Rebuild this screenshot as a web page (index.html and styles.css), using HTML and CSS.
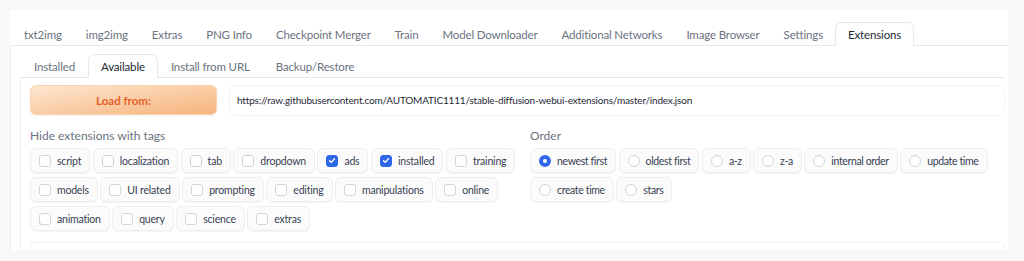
FILE: index.html
```html
<!DOCTYPE html>
<html>
<head>
<meta charset="utf-8">
<link rel="stylesheet" href="styles.css">
</head>
<body>
<div class="app">
  <div class="tabs main-tabs">
    <span class="tab">txt2img</span>
    <span class="tab">img2img</span>
    <span class="tab">Extras</span>
    <span class="tab">PNG Info</span>
    <span class="tab">Checkpoint Merger</span>
    <span class="tab">Train</span>
    <span class="tab">Model Downloader</span>
    <span class="tab">Additional Networks</span>
    <span class="tab">Image Browser</span>
    <span class="tab">Settings</span>
    <span class="tab selected">Extensions</span>
  </div>
  <div class="panel">
    <div class="tabs sub-tabs">
      <span class="tab">Installed</span>
      <span class="tab selected">Available</span>
      <span class="tab">Install from URL</span>
      <span class="tab">Backup/Restore</span>
    </div>
    <div class="inner">
      <div class="load-row">
        <button class="load-btn">Load from:</button>
        <div class="url-box">https://raw.githubusercontent.com/AUTOMATIC1111/stable-diffusion-webui-extensions/master/index.json</div>
      </div>
      <div class="cols">
        <div class="col">
          <div class="label">Hide extensions with tags</div>
          <div class="options">
            <label class="opt"><span class="cb"></span>script</label>
            <label class="opt"><span class="cb"></span>localization</label>
            <label class="opt"><span class="cb"></span>tab</label>
            <label class="opt"><span class="cb"></span>dropdown</label>
            <label class="opt"><span class="cb on"><svg viewBox="0 0 12 12" width="11" height="11"><path d="M3 6.2 L5.1 8.2 L9 3.9" fill="none" stroke="#fff" stroke-width="1.6" stroke-linecap="round" stroke-linejoin="round"/></svg></span>ads</label>
            <label class="opt"><span class="cb on"><svg viewBox="0 0 12 12" width="11" height="11"><path d="M3 6.2 L5.1 8.2 L9 3.9" fill="none" stroke="#fff" stroke-width="1.6" stroke-linecap="round" stroke-linejoin="round"/></svg></span>installed</label>
            <label class="opt"><span class="cb"></span>training</label>
            <label class="opt"><span class="cb"></span>models</label>
            <label class="opt"><span class="cb"></span>UI related</label>
            <label class="opt"><span class="cb"></span>prompting</label>
            <label class="opt"><span class="cb"></span>editing</label>
            <label class="opt"><span class="cb"></span>manipulations</label>
            <label class="opt"><span class="cb"></span>online</label>
            <label class="opt"><span class="cb"></span>animation</label>
            <label class="opt"><span class="cb"></span>query</label>
            <label class="opt"><span class="cb"></span>science</label>
            <label class="opt"><span class="cb"></span>extras</label>
          </div>
        </div>
        <div class="col order-col">
          <div class="label">Order</div>
          <div class="options">
            <label class="opt"><span class="rd on"></span>newest first</label>
            <label class="opt"><span class="rd"></span>oldest first</label>
            <label class="opt"><span class="rd"></span>a-z</label>
            <label class="opt"><span class="rd"></span>z-a</label>
            <label class="opt"><span class="rd"></span>internal order</label>
            <label class="opt"><span class="rd"></span>update time</label>
            <label class="opt"><span class="rd"></span>create time</label>
            <label class="opt"><span class="rd"></span>stars</label>
          </div>
        </div>
      </div>
      <div class="next-block"></div>
    </div>
  </div>
</div>
</body>
</html>
```
FILE: styles.css
```css
* { box-sizing: border-box; }
html, body { margin: 0; padding: 0; }
body {
  background: #f8f8f9;
  font-family: Lato, "Noto Sans", sans-serif;
  width: 1024px;
  height: 261px;
  overflow: hidden;
  padding: 10px 0 0 10px;
}
.app {
  width: 998px;
  height: 240px;
  background: #fff;
  display: flex;
  flex-direction: column;
}
.tabs {
  display: flex;
  align-items: flex-end;
  border-bottom: 1px solid #e7e8eb;
  flex-shrink: 0;
}
.main-tabs {
  height: 36px;
  padding-left: 2px;
}
.tab {
  font-size: 11.5px;
  letter-spacing: -0.15px;
  color: #6b7280;
  padding: 0 11px;
  height: 24px;
  line-height: 23px;
  border: 1px solid transparent;
  border-bottom: none;
  border-radius: 6px 6px 0 0;
  margin-bottom: -1px;
  white-space: nowrap;
}
.main-tabs .tab.selected { padding: 0 12px; }
.tab.selected {
  color: #1f2937;
  background: #fff;
  border-color: #e7e8eb;
}
.panel {
  flex: 1;
  min-height: 0;
  border-left: 1px solid #eceef0;
  padding: 0 3px 0 9px;
  display: flex;
  flex-direction: column;
}
.sub-tabs {
  height: 32px;
  padding-left: 1px;
}
.sub-tabs .tab { padding: 0 12px; }
.inner {
  flex: 1;
  min-height: 0;
  border-left: 1px solid #eceef0;
  padding: 7px 0 0 9px;
  display: flex;
  flex-direction: column;
}
.load-row {
  display: flex;
  gap: 12px;
  height: 31px;
  flex-shrink: 0;
}
.load-btn {
  width: 187px;
  height: 30px;
  border: 1px solid #fbd2ad;
  border-radius: 6px;
  background: linear-gradient(to bottom right, #fde7d0, #f6b47c);
  color: #e8602a;
  font-family: inherit;
  font-weight: 700;
  font-size: 11.5px;
  box-shadow: 0 1px 2px rgba(0,0,0,0.05);
}
.url-box {
  flex: 1;
  height: 31px;
  background: #fff;
  border: 1px solid #f2f3f5;
  border-radius: 6px;
  font-size: 10px;
  letter-spacing: -0.18px;
  color: #1f2937;
  line-height: 29px;
  padding-left: 7px;
  white-space: nowrap;
  overflow: hidden;
}
.cols {
  display: grid;
  grid-template-columns: 495px 1fr;
  gap: 5px;
  margin-top: 12px;
  flex-shrink: 0;
}
.label {
  font-size: 12px;
  color: #6b7280;
  line-height: 16px;
  margin-bottom: 4px;
}
.options {
  display: flex;
  flex-wrap: wrap;
  gap: 4px 2.5px;
}
.opt {
  display: flex;
  align-items: center;
  height: 25px;
  padding: 0 8px;
  border: 1px solid #eceef1;
  border-radius: 6px;
  background: #fbfbfc;
  box-shadow: 0 1px 1px rgba(0,0,0,0.04);
  font-size: 10.5px;
  letter-spacing: -0.2px;
  color: #374151;
  white-space: nowrap;
}
.order-col .opt { letter-spacing: -0.36px; }
.cb {
  width: 12px;
  height: 12px;
  border: 1px solid #d1d5db;
  border-radius: 3px;
  background: #fff;
  margin-right: 6px;
  display: flex;
  align-items: center;
  justify-content: center;
  flex-shrink: 0;
}
.cb.on {
  background: #2f67ea;
  border-color: #2f67ea;
}
.rd {
  width: 12px;
  height: 12px;
  border: 1px solid #d1d5db;
  border-radius: 50%;
  background: #fff;
  margin-right: 6px;
  flex-shrink: 0;
}
.rd.on {
  border: 4px solid #2f67ea;
}
.next-block {
  margin-top: auto;
  height: 8px;
  border: 1px solid #eff0f2;
  border-bottom: none;
  border-radius: 4px 4px 0 0;
  flex-shrink: 0;
}
```
